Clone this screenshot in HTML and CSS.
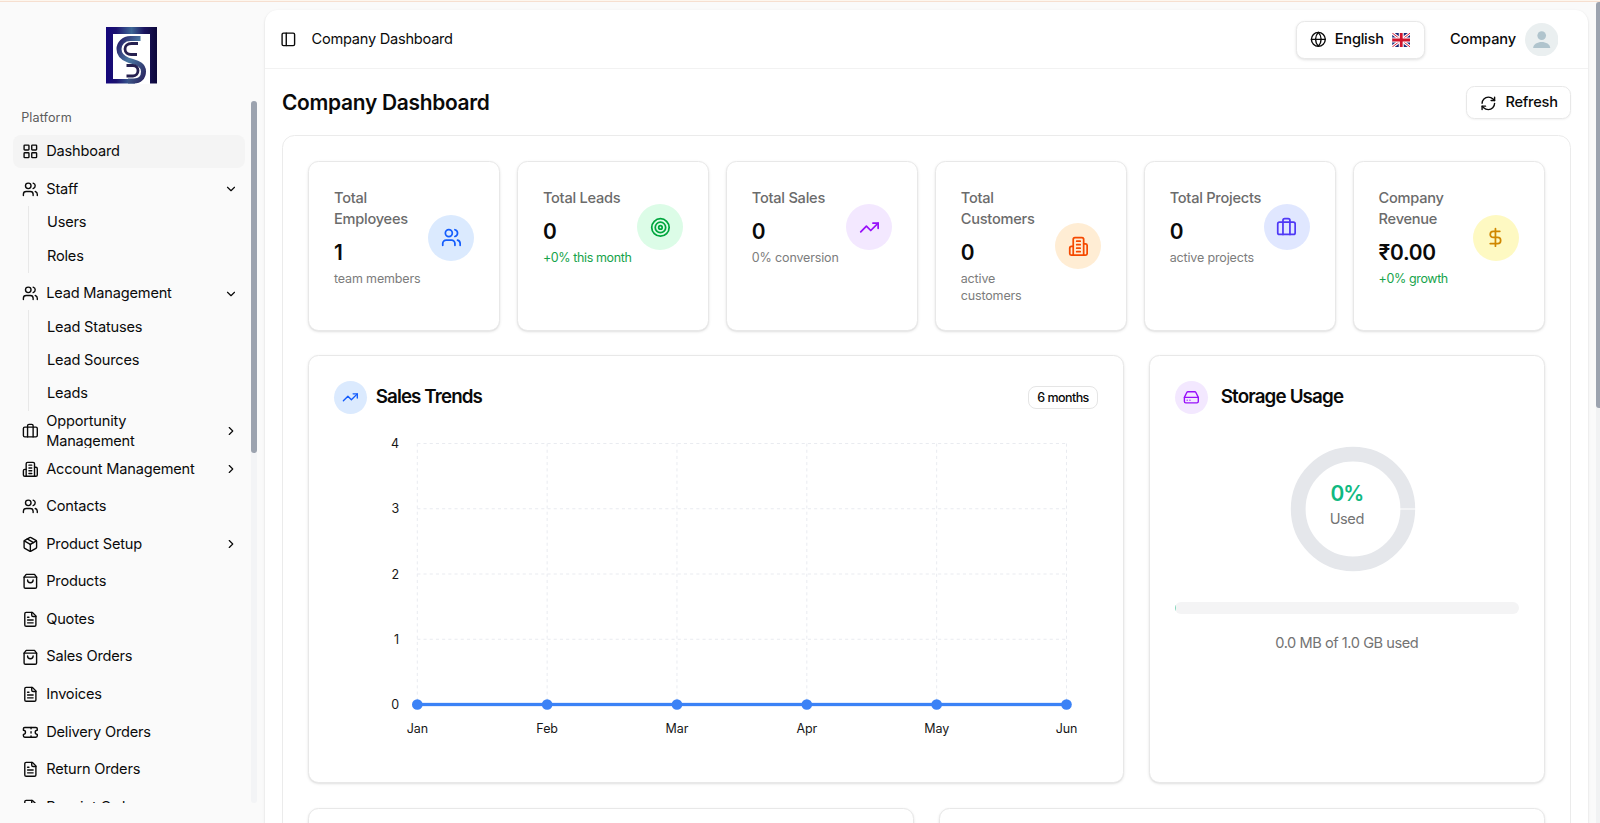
FILE: index.html
```html
<!DOCTYPE html>
<html lang="en">
<head>
<meta charset="utf-8">
<title>Company Dashboard</title>
<link rel="stylesheet" href="styles.css">
</head>
<body>
<svg class="sprite" aria-hidden="true">
  <defs>
    <symbol id="i-grid" viewBox="0 0 24 24"><rect width="7" height="7" x="3" y="3" rx="1"/><rect width="7" height="7" x="14" y="3" rx="1"/><rect width="7" height="7" x="14" y="14" rx="1"/><rect width="7" height="7" x="3" y="14" rx="1"/></symbol>
    <symbol id="i-users" viewBox="0 0 24 24"><path d="M16 21v-2a4 4 0 0 0-4-4H6a4 4 0 0 0-4 4v2"/><circle cx="9" cy="7" r="4"/><path d="M22 21v-2a4 4 0 0 0-3-3.87"/><path d="M16 3.13a4 4 0 0 1 0 7.75"/></symbol>
    <symbol id="i-down" viewBox="0 0 24 24"><path d="m6 9 6 6 6-6"/></symbol>
    <symbol id="i-right" viewBox="0 0 24 24"><path d="m9 18 6-6-6-6"/></symbol>
    <symbol id="i-case" viewBox="0 0 24 24"><path d="M16 20V4a2 2 0 0 0-2-2h-4a2 2 0 0 0-2 2v16"/><rect width="20" height="14" x="2" y="6" rx="2"/></symbol>
    <symbol id="i-building" viewBox="0 0 24 24"><path d="M6 22V4a2 2 0 0 1 2-2h8a2 2 0 0 1 2 2v18Z"/><path d="M6 12H4a2 2 0 0 0-2 2v6a2 2 0 0 0 2 2h2"/><path d="M18 9h2a2 2 0 0 1 2 2v9a2 2 0 0 1-2 2h-2"/><path d="M10 6h4M10 10h4M10 14h4M10 18h4"/></symbol>
    <symbol id="i-package" viewBox="0 0 24 24"><path d="M11 21.73a2 2 0 0 0 2 0l7-4A2 2 0 0 0 21 16V8a2 2 0 0 0-1-1.73l-7-4a2 2 0 0 0-2 0l-7 4A2 2 0 0 0 3 8v8a2 2 0 0 0 1 1.73z"/><path d="M12 22V12"/><path d="m3.3 7 8.7 5 8.7-5"/><path d="m7.5 4.27 9 5.15"/></symbol>
    <symbol id="i-bag" viewBox="0 0 24 24"><path d="M6 2 3 6v14a2 2 0 0 0 2 2h14a2 2 0 0 0 2-2V6l-3-4Z"/><path d="M3 6h18"/><path d="M16 10a4 4 0 0 1-8 0"/></symbol>
    <symbol id="i-file" viewBox="0 0 24 24"><path d="M15 2H6a2 2 0 0 0-2 2v16a2 2 0 0 0 2 2h12a2 2 0 0 0 2-2V7Z"/><path d="M14 2v4a2 2 0 0 0 2 2h4"/><path d="M10 9H8M16 13H8M16 17H8"/></symbol>
    <symbol id="i-ticket" viewBox="0 0 24 24"><path d="M2 9a3 3 0 0 1 0 6v2a2 2 0 0 0 2 2h16a2 2 0 0 0 2-2v-2a3 3 0 0 1 0-6V7a2 2 0 0 0-2-2H4a2 2 0 0 0-2 2Z"/><path d="M13 5v2M13 17v2M13 11v2"/></symbol>
    <symbol id="i-panel" viewBox="0 0 24 24"><rect width="18" height="18" x="3" y="3" rx="2"/><path d="M9 3v18"/></symbol>
    <symbol id="i-globe" viewBox="0 0 24 24"><circle cx="12" cy="12" r="10"/><path d="M12 2a14.5 14.5 0 0 0 0 20 14.5 14.5 0 0 0 0-20"/><path d="M2 12h20"/></symbol>
    <symbol id="i-refresh" viewBox="0 0 24 24"><path d="M3 12a9 9 0 0 1 9-9 9.75 9.75 0 0 1 6.74 2.74L21 8"/><path d="M21 3v5h-5"/><path d="M21 12a9 9 0 0 1-9 9 9.75 9.75 0 0 1-6.74-2.74L3 16"/><path d="M8 16H3v5"/></symbol>
    <symbol id="i-target" viewBox="0 0 24 24"><circle cx="12" cy="12" r="10"/><circle cx="12" cy="12" r="6"/><circle cx="12" cy="12" r="2"/></symbol>
    <symbol id="i-trend" viewBox="0 0 24 24"><path d="m22 7-8.5 8.5-5-5L2 17"/><path d="M16 7h6v6"/></symbol>
    <symbol id="i-dollar" viewBox="0 0 24 24"><path d="M12 2v20"/><path d="M17 5H9.500a3.500 3.500 0 0 0 0 7h5a3.500 3.500 0 0 1 0 7H6"/></symbol>
    <symbol id="i-drive" viewBox="0 0 24 24"><path d="M22 12H2"/><path d="M5.450 5.110 2 12v6a2 2 0 0 0 2 2h16a2 2 0 0 0 2-2v-6l-3.450-6.890A2 2 0 0 0 16.760 4H7.240a2 2 0 0 0-1.790 1.110z"/><path d="M6 16h.01M10 16h.01"/></symbol>
  </defs>
</svg>

<div class="strip"></div>
<div class="app">
  <aside class="sidebar">
    <div class="brand">
      <svg class="logo" viewBox="0 0 51 57">
        <defs>
          <linearGradient id="frame" x1="0" x2="1" y1="0" y2="0"><stop offset="0" stop-color="#14067c"/><stop offset=".2" stop-color="#1c1270"/><stop offset=".5" stop-color="#3d6796"/><stop offset=".75" stop-color="#1c1560"/><stop offset="1" stop-color="#0b0638"/></linearGradient>
          <linearGradient id="ess" x1="0" x2="1" y1="0" y2="1"><stop offset="0" stop-color="#241c66"/><stop offset=".45" stop-color="#4a78a2"/><stop offset="1" stop-color="#2a2560"/></linearGradient>
        </defs>
        <rect width="51" height="57" fill="#fff"/>
        <path d="M0 0h51v56.500h-7V7H7v45h22v4.500H0z" fill="url(#frame)"/>
        <path d="M34.500 11.500H24.500c-7 0-11.500 5-11.500 10.500 0 6 4 9 9 11 6 2.500 15.500 3 15.500 11.500 0 6-4 9.500-9.500 9.500H22" fill="none" stroke="url(#ess)" stroke-width="5"/>
        <path d="M32 16.500h-6.500c-4 0-6.500 2.500-6.500 5.500 0 3.500 3 5.500 6 5.500h6M20.500 38.500H27c3 0 5 2 5 5s-2 5.500-5 5.500h-6.500" fill="none" stroke="#262050" stroke-width="2.800"/>
      </svg>
    </div>
    <div class="nav-scroll">
      <nav class="nav">
        <div class="nav-label">Platform</div>
        <a class="item active"><svg class="ic"><use href="#i-grid"/></svg><span>Dashboard</span></a>
        <div>
          <a class="item"><svg class="ic"><use href="#i-users"/></svg><span>Staff</span><svg class="chev"><use href="#i-down"/></svg></a>
          <div class="sub"><a>Users</a><a>Roles</a></div>
        </div>
        <div>
          <a class="item"><svg class="ic"><use href="#i-users"/></svg><span>Lead Management</span><svg class="chev"><use href="#i-down"/></svg></a>
          <div class="sub"><a>Lead Statuses</a><a>Lead Sources</a><a>Leads</a></div>
        </div>
        <a class="item"><svg class="ic"><use href="#i-case"/></svg><span>Opportunity Management</span><svg class="chev"><use href="#i-right"/></svg></a>
        <a class="item"><svg class="ic"><use href="#i-building"/></svg><span>Account Management</span><svg class="chev"><use href="#i-right"/></svg></a>
        <a class="item"><svg class="ic"><use href="#i-users"/></svg><span>Contacts</span></a>
        <a class="item"><svg class="ic"><use href="#i-package"/></svg><span>Product Setup</span><svg class="chev"><use href="#i-right"/></svg></a>
        <a class="item"><svg class="ic"><use href="#i-bag"/></svg><span>Products</span></a>
        <a class="item"><svg class="ic"><use href="#i-file"/></svg><span>Quotes</span></a>
        <a class="item"><svg class="ic"><use href="#i-bag"/></svg><span>Sales Orders</span></a>
        <a class="item"><svg class="ic"><use href="#i-file"/></svg><span>Invoices</span></a>
        <a class="item"><svg class="ic"><use href="#i-ticket"/></svg><span>Delivery Orders</span></a>
        <a class="item"><svg class="ic"><use href="#i-file"/></svg><span>Return Orders</span></a>
        <a class="item"><svg class="ic"><use href="#i-file"/></svg><span>Receipt Orders</span></a>
      </nav>
      <div class="track"><div class="thumb"></div></div>
    </div>
  </aside>

  <main class="main">
    <header class="topbar">
      <svg class="ic"><use href="#i-panel"/></svg>
      <span class="crumb">Company Dashboard</span>
      <button class="lang">
        <svg class="ic"><use href="#i-globe"/></svg><span>English</span>
        <svg class="flag" viewBox="0 0 18 14"><rect width="18" height="14" fill="#1b2a78"/><path d="M0 0 18 14M18 0 0 14" stroke="#fff" stroke-width="3"/><path d="M0 0 18 14M18 0 0 14" stroke="#d8223b" stroke-width="1"/><path d="M9 0v14M0 7h18" stroke="#fff" stroke-width="5"/><path d="M9 0v14M0 7h18" stroke="#d0142c" stroke-width="2.800"/></svg>
      </button>
      <span class="user">Company</span>
      <svg class="avatar" viewBox="0 0 34 34"><circle cx="17" cy="17" r="17" fill="#eaeff0"/><circle cx="17" cy="12.800" r="4.400" fill="#b0c4cd"/><path d="M8.300 25.500c0-4 4.500-6.200 8.700-6.200s8.700 2.200 8.700 6.200z" fill="#b0c4cd"/></svg>
    </header>

    <div class="content">
      <div class="title-row">
        <h1>Company Dashboard</h1>
        <button class="refresh"><svg class="ic"><use href="#i-refresh"/></svg><span>Refresh</span></button>
      </div>

      <div class="panel">
        <section class="stats">
          <div class="card stat"><div class="stat-body"><div><p class="name">Total Employees</p><p class="value">1</p><p class="note">team members</p></div><i class="dot blue"><svg><use href="#i-users"/></svg></i></div></div>
          <div class="card stat"><div class="stat-body"><div><p class="name">Total Leads</p><p class="value">0</p><p class="note up">+0% this month</p></div><i class="dot green"><svg><use href="#i-target"/></svg></i></div></div>
          <div class="card stat"><div class="stat-body"><div><p class="name">Total Sales</p><p class="value">0</p><p class="note">0% conversion</p></div><i class="dot purple"><svg><use href="#i-trend"/></svg></i></div></div>
          <div class="card stat"><div class="stat-body"><div><p class="name">Total Customers</p><p class="value">0</p><p class="note">active customers</p></div><i class="dot orange"><svg><use href="#i-building"/></svg></i></div></div>
          <div class="card stat"><div class="stat-body"><div><p class="name">Total Projects</p><p class="value">0</p><p class="note">active projects</p></div><i class="dot indigo"><svg><use href="#i-case"/></svg></i></div></div>
          <div class="card stat"><div class="stat-body"><div><p class="name">Company Revenue</p><p class="value">₹0.00</p><p class="note up">+0% growth</p></div><i class="dot yellow"><svg><use href="#i-dollar"/></svg></i></div></div>
        </section>

        <section class="charts">
          <div class="card trends">
            <div class="card-head">
              <i class="dot small blue"><svg><use href="#i-trend"/></svg></i>
              <h2>Sales Trends</h2>
              <span class="badge">6 months</span>
            </div>
            <svg class="line-chart" viewBox="0 0 764 340">
              <g class="gridlines">
                <path d="M83.300 29.500h649.200M83.300 94.750h649.200M83.300 160h649.200M83.300 225.250h649.200"/>
                <path d="M83.300 29.500v261M213.140 29.500v261M342.980 29.500v261M472.820 29.500v261M602.660 29.500v261M732.500 29.500v261"/>
              </g>
              <path class="halo" d="M83.300 290.500h649.200"/>
              <path class="series" d="M83.300 290.500h649.200"/>
              <g class="points"><circle cx="83.300" cy="290.500" r="5.300"/><circle cx="213.140" cy="290.500" r="5.300"/><circle cx="342.980" cy="290.500" r="5.300"/><circle cx="472.820" cy="290.500" r="5.300"/><circle cx="602.660" cy="290.500" r="5.300"/><circle cx="732.500" cy="290.500" r="5.300"/></g>
              <g class="ylab"><text x="65" y="34">4</text><text x="65" y="99.200">3</text><text x="65" y="164.500">2</text><text x="65" y="229.700">1</text><text x="65" y="295">0</text></g>
              <g class="xlab"><text x="83.300" y="318.500">Jan</text><text x="213.140" y="318.500">Feb</text><text x="342.980" y="318.500">Mar</text><text x="472.820" y="318.500">Apr</text><text x="602.660" y="318.500">May</text><text x="732.500" y="318.500">Jun</text></g>
            </svg>
          </div>

          <div class="card storage">
            <div class="card-head">
              <i class="dot small purple"><svg><use href="#i-drive"/></svg></i>
              <h2>Storage Usage</h2>
            </div>
            <div class="gauge">
              <svg class="donut" viewBox="0 0 126 126"><circle cx="63" cy="63" r="54.800"/><path d="M110 63h16"/></svg>
              <div class="gauge-text"><b>0%</b><span>Used</span></div>
            </div>
            <div class="bar"><div class="fill"></div></div>
            <p class="used">0.0 MB of 1.0 GB used</p>
          </div>
        </section>

        <section class="more"><div class="card"></div><div class="card"></div></section>
      </div>
    </div>
  </main>
  <div class="page-track"><div class="page-thumb"></div></div>
</div>
</body>
</html>
```

FILE: styles.css
```css
* { box-sizing: border-box; margin: 0; padding: 0; }

body {
  height: 823px;
  overflow: hidden;
  display: flex;
  flex-direction: column;
  background: #fafafa;
  color: #0a0a0a;
  font-family: Inter, "Liberation Sans", sans-serif;
  font-size: 14.6px;
  line-height: 20.9px;
  letter-spacing: -0.25px;
}

svg { fill: none; stroke: currentColor; stroke-width: 2; stroke-linecap: round; stroke-linejoin: round; flex: none; }
.sprite { position: absolute; width: 0; height: 0; }
.logo, .flag, .avatar { stroke: none; stroke-linecap: butt; }
.ic { width: 16.7px; height: 16.7px; }

.strip { height: 2px; flex: none; background: #fdf6ee; border-bottom: 1px solid #f6dfd0; }
.app { flex: 1; min-height: 0; display: flex; }

/* sidebar */
.sidebar { width: 265px; flex: none; display: flex; flex-direction: column; padding-bottom: 20px; }
.brand { height: 99px; flex: none; padding: 25px 0 0 106px; }
.logo { display: block; width: 51px; height: 57px; }
.nav-scroll { flex: 1; min-height: 0; display: flex; justify-content: space-between; padding: 0 7.800px 0 13.200px; }
.nav { width: 232px; overflow: hidden; display: flex; flex-direction: column; gap: 4.200px; letter-spacing: -0.2px; }
.nav > * { flex: none; }
.nav-label { height: 29.900px; padding: 7.200px 8px 0; font-size: 12.600px; letter-spacing: 0.1px; color: #5c5c5c; }
.item { display: flex; align-items: center; height: 33.400px; padding: 0 8.350px; gap: 8px; overflow: hidden; border-radius: 8px; }
.item span { flex: 1; padding-right: 8px; }
.active { background: #f4f4f4; }
.chev { width: 14px; height: 14px; margin-right: -1px; }
.sub { margin-left: 15px; padding-left: 17.800px; border-left: 1px solid #e8e8e8; }
.sub a { display: flex; align-items: center; height: 33.400px; }
.track { width: 6.200px; background: #f3f4f6; border-radius: 3px; }
.thumb { height: 351.500px; background: #9ca3af; border-radius: 3px; }

/* main area */
.main { flex: 1; min-width: 0; margin: 8px 8.500px 0 0; overflow: hidden; background: #fff; border-radius: 12.500px 12.500px 0 0; box-shadow: 0 1px 3px rgba(0,0,0,.1), 0 1px 2px rgba(0,0,0,.06); }
.page-track { width: 4px; background: #f1f2f3; }
.page-thumb { height: 406px; background: #9ca3af; border-radius: 3px 0 0 3px; }

.topbar { height: 59px; border-bottom: 1px solid #f2f2f2; display: flex; align-items: center; padding: 1px 29.500px 0 15.200px; }
.crumb { margin-left: 14.700px; flex: 1; }
button { font: inherit; letter-spacing: inherit; color: inherit; background: #fff; border: 1px solid #e8e8e8; display: flex; align-items: center; border-radius: 8.500px; }
.lang { width: 129px; height: 38px; padding: 0 12.500px; gap: 8.200px; box-shadow: 0 1px 3px rgba(0,0,0,.12); font-weight: 500; }
.flag { width: 18.500px; height: 14px; }
.user { margin-left: 24.500px; font-weight: 500; letter-spacing: -0.1px; }
.avatar { width: 33.400px; height: 33.400px; margin-left: 8.500px; }

.content { padding: 16.700px 16.700px 0 17px; }
.title-row { display: flex; justify-content: space-between; align-items: center; height: 33.400px; }
h1 { font-size: 20.900px; line-height: 29px; font-weight: 600; letter-spacing: -0.28px; }
.refresh { height: 33.400px; width: 104.500px; padding: 1px 13px 0; gap: 8.500px; font-weight: 500; box-shadow: 0 1px 2px rgba(0,0,0,.05); }

.panel { margin-top: 16.200px; height: 800px; border: 1px solid #ebebeb; border-radius: 12.500px; padding: 24.600px 25px; }
.card { background: #fff; border: 1px solid #e8e8e8; border-radius: 10.500px; box-shadow: 0 1px 3px rgba(0,0,0,.1), 0 1px 2px -1px rgba(0,0,0,.1); }
.stats { display: grid; grid-template-columns: repeat(6, minmax(0, 1fr)); gap: 16.700px; height: 169px; }
.stat { padding: 25.800px 25px; }
.stat-body { display: flex; justify-content: space-between; align-items: center; }
.stat-body > div { min-width: 0; }
.name { color: #6b6b6b; font-weight: 500; }
.value { margin-top: 8.350px; font-size: 20.900px; line-height: 29.200px; font-weight: 600; }
.note { margin-top: 4.200px; font-size: 12.500px; line-height: 16.700px; color: #7c7c7c; letter-spacing: -0.15px; }
.up { color: #16a34a; letter-spacing: -0.38px; }

.dot { flex: none; width: 46px; height: 46px; border-radius: 50%; display: grid; place-items: center; }
.dot svg { width: 20.900px; height: 20.900px; }
.small { width: 33.400px; height: 33.400px; }
.small svg { width: 16.700px; height: 16.700px; }
.blue { background: #dbeafe; color: #155dfc; }
.green { background: #dcfce7; color: #00a63e; }
.purple { background: #f3e8ff; color: #9810fa; }
.orange { background: #ffedd4; color: #f54900; }
.indigo { background: #e0e7ff; color: #4f39f6; }
.yellow { background: #fef9c2; color: #d08700; }

.charts { margin-top: 25px; display: grid; grid-template-columns: 815.800px 1fr; gap: 25px; height: 428px; }
.charts > .card { padding: 25px; }
.card-head { display: flex; align-items: center; height: 33.400px; }
h2 { font-size: 18.800px; font-weight: 600; letter-spacing: -0.9px; margin-left: 8.300px; flex: 1; }
.storage h2 { margin-left: 12.500px; letter-spacing: -0.85px; }
.badge { border: 1px solid #e5e5e5; border-radius: 8px; height: 23px; padding: 0 8px; font-size: 12.500px; line-height: 21px; font-weight: 500; letter-spacing: -0.55px; }

.line-chart { display: block; width: 764px; height: 340px; stroke: none; }
.gridlines { stroke: #e9ebf0; stroke-width: 1; stroke-dasharray: 3.100 3.100; stroke-linecap: butt; }
.halo { stroke: #c9dcfc; stroke-width: 4; stroke-linecap: butt; }
.series { stroke: #3b82f6; stroke-width: 3; }
.points { fill: #3b82f6; }
.ylab, .xlab { fill: #171717; font-size: 12.500px; letter-spacing: -0.1px; }
.ylab { text-anchor: end; }
.xlab { text-anchor: middle; }

.gauge { display: flex; justify-content: center; margin-top: 32px; }
.donut { width: 126px; height: 126px; stroke: #e5e7eb; stroke-width: 14.800; margin-left: 12px; }
.donut path { stroke: #fff; stroke-width: 1; }
.gauge-text { position: absolute; margin-top: 33px; text-align: center; display: flex; flex-direction: column; gap: 1px; }
.gauge-text b { font-size: 20.900px; line-height: 29px; font-weight: 600; color: #10b981; letter-spacing: -1px; }
.gauge-text span, .used { color: #737373; letter-spacing: -0.45px; }
.bar { margin-top: 29.500px; height: 12.500px; border-radius: 6.250px; background: #f4f4f5; overflow: hidden; }
.fill { width: 0.5px; height: 100%; background: #10b981; opacity: .5; }
.used { margin-top: 18.500px; text-align: center; }

.more { margin-top: 25px; display: grid; grid-template-columns: 1fr 1fr; gap: 25px; height: 300px; }
```
